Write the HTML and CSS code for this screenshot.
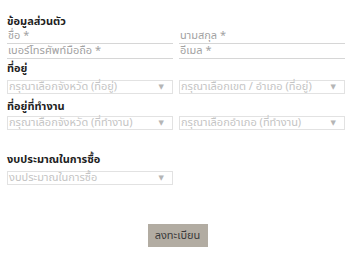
FILE: index.html
```html
<!DOCTYPE html>
<html lang="th">
<head>
<meta charset="utf-8">
<link rel="stylesheet" href="styles.css">
</head>
<body>
<form class="form">
  <h3 class="section-title first">ข้อมูลส่วนตัว</h3>
  <div class="row">
    <div class="text-field">ชื่อ *</div>
    <div class="text-field">นามสกุล *</div>
  </div>
  <div class="row">
    <div class="text-field">เบอร์โทรศัพท์มือถือ *</div>
    <div class="text-field">อีเมล *</div>
  </div>
  <h3 class="section-title">ที่อยู่</h3>
  <div class="row">
    <div class="select"><span>กรุณาเลือกจังหวัด (ที่อยู่)</span><span class="arrow">▼</span></div>
    <div class="select"><span>กรุณาเลือกเขต / อำเภอ (ที่อยู่)</span><span class="arrow">▼</span></div>
  </div>
  <h3 class="section-title work">ที่อยู่ที่ทำงาน</h3>
  <div class="row">
    <div class="select tight"><span>กรุณาเลือกจังหวัด (ที่ทำงาน)</span><span class="arrow">▼</span></div>
    <div class="select tight"><span>กรุณาเลือกอำเภอ (ที่ทำงาน)</span><span class="arrow">▼</span></div>
  </div>
  <h3 class="section-title budget">งบประมาณในการซื้อ</h3>
  <div class="row">
    <div class="select"><span>งบประมาณในการซื้อ</span><span class="arrow">▼</span></div>
  </div>
  <div class="actions">
    <button type="button" class="submit">ลงทะเบียน</button>
  </div>
</form>
</body>
</html>
```

FILE: styles.css
```css
html, body {
  margin: 0;
  padding: 0;
  background: #fff;
}
body {
  font-family: "Noto Sans Thai", "Noto Sans", "DejaVu Sans", sans-serif;
  font-size: 11px;
  color: #999;
}
.form {
  padding: 16px 10px 0 7px;
}
.section-title {
  margin: 3px 0 1px;
  font-size: 11px;
  font-weight: 700;
  color: #1f1f1f;
  line-height: 14px;
}
.section-title.first {
  margin-top: 0;
  line-height: 12px;
}
.section-title.work {
  margin-top: 6px;
}
.section-title.budget {
  margin-top: 23px;
}
.row {
  display: grid;
  grid-template-columns: 166px 166px;
  column-gap: 6px;
}
.text-field {
  height: 14px;
  line-height: 14px;
  border-bottom: 1px solid #d6d6d6;
  padding-left: 1px;
  color: #a2a2a2;
}
.select {
  display: flex;
  justify-content: space-between;
  align-items: center;
  height: 12px;
  border: 1px solid #e2e2e2;
  padding: 0 8px 0 1px;
  color: #c4c4c4;
  line-height: 12px;
  margin-top: 3px;
}
.select.tight {
  margin-top: 1px;
}
.arrow {
  font-size: 7px;
  color: #b5b5b5;
}
.actions {
  display: flex;
  justify-content: center;
  padding: 39px 0 0 5px;
}
.submit {
  font-family: inherit;
  font-size: 11px;
  color: #3a3a3a;
  background: #b2aca2;
  border: none;
  width: 60px;
  height: 23px;
  padding: 0;
}
```
